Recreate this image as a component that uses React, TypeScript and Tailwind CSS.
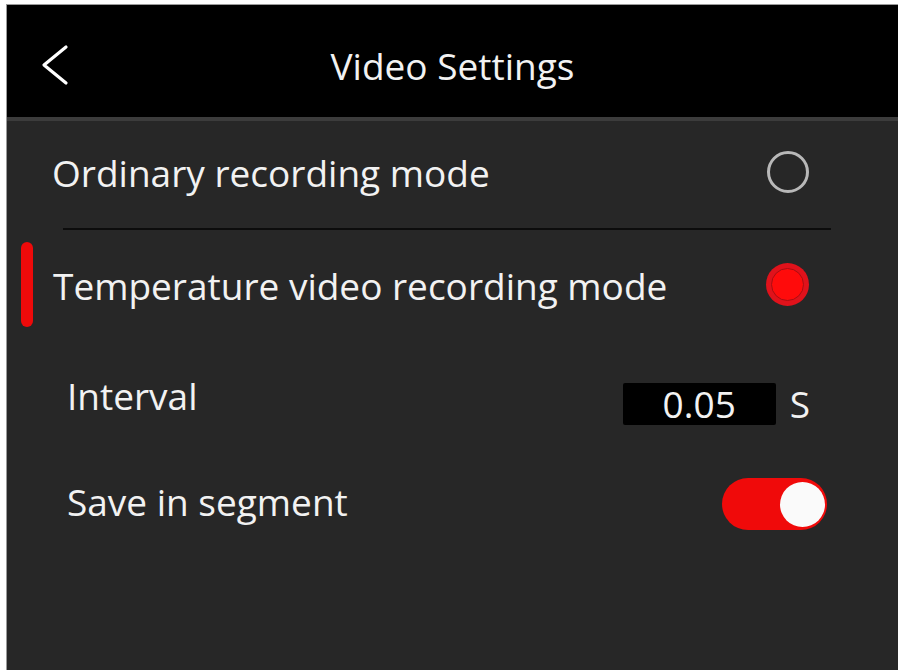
import React, { useState } from 'react';

const font = { fontFamily: '"Open Sans", "Noto Sans", sans-serif' };

const Radio: React.FC<{ on: boolean }> = ({ on }) =>
  on ? (
    <div className="w-[43px] h-[43px] rounded-full bg-[#e0121b] flex items-center justify-center">
      <div className="w-[33px] h-[33px] rounded-full bg-[#ff0b0b] border-[1.5px] border-[#a80e13]" />
    </div>
  ) : (
    <div className="w-[42px] h-[42px] rounded-full border-[3px] border-[#b8b8b8]" />
  );

const App: React.FC = () => {
  const [mode, setMode] = useState<'ordinary' | 'temp'>('temp');
  const [segment, setSegment] = useState(true);

  return (
    <div className="w-[898px] h-[670px] bg-white pt-[4px] pl-[6px]" style={font}>
      <div className="h-full flex flex-col bg-[#272727] border-t border-l border-[#9a9a9a] text-[#f2f2f2] overflow-hidden">
        {/* Header */}
        <div className="relative h-[116px] bg-black flex items-center justify-center border-b-[4px] border-[#3c3c3c] shrink-0">
          <button className="absolute left-[34px] top-[39px]">
            <svg width="28" height="42" viewBox="0 0 28 42" fill="none">
              <path d="M25 3 L3 21 L25 39" stroke="white" strokeWidth="3.2" strokeLinecap="round" strokeLinejoin="round" />
            </svg>
          </button>
          <h1 className="text-[37px] leading-none pt-[8px]">Video Settings</h1>
        </div>

        {/* Ordinary */}
        <div
          className="h-[107px] flex items-center justify-between pl-[45px] pr-[89px] pb-[5px] cursor-pointer"
          onClick={() => setMode('ordinary')}
        >
          <span className="text-[37px] leading-none">Ordinary recording mode</span>
          <Radio on={mode === 'ordinary'} />
        </div>

        <div className="h-[2px] bg-[#0c0c0c] ml-[56px] mr-[67px]" />

        {/* Temperature */}
        <div
          className="h-[108px] flex items-center pl-[14px] pr-[89px] cursor-pointer"
          onClick={() => setMode('temp')}
        >
          <div className={`w-[12px] h-[85px] rounded-full ${mode === 'temp' ? 'bg-[#ee0a0a]' : 'bg-transparent'}`} />
          <span className="ml-[20px] mt-[2px] flex-1 text-[37px] leading-none">Temperature video recording mode</span>
          <Radio on={mode === 'temp'} />
        </div>

        {/* Interval */}
        <div className="h-[118px] flex items-center justify-between pl-[60px] pr-[88px]">
          <span className="text-[37px] leading-none pb-[4px]">Interval</span>
          <div className="flex items-center gap-[14px] mt-[14px]">
            <div className="w-[153px] h-[42px] bg-black rounded-[2px] flex items-center justify-center">
              <span className="text-[37px] leading-none pb-[2px]">0.05</span>
            </div>
            <span className="text-[37px] leading-none pb-[2px]">S</span>
          </div>
        </div>

        {/* Save in segment */}
        <div className="h-[92px] flex items-center justify-between pl-[60px] pr-[71px]">
          <span className="text-[37px] leading-none pb-[2px]">Save in segment</span>
          <button
            onClick={() => setSegment(!segment)}
            className={`w-[105px] h-[52px] mt-[4px] rounded-full flex items-center px-[2px] ${segment ? 'bg-[#f00a0a] justify-end' : 'bg-[#555] justify-start'}`}
          >
            <div className="w-[45px] h-[45px] rounded-full bg-[#fafafa]" />
          </button>
        </div>
      </div>
    </div>
  );
};

export default App;
